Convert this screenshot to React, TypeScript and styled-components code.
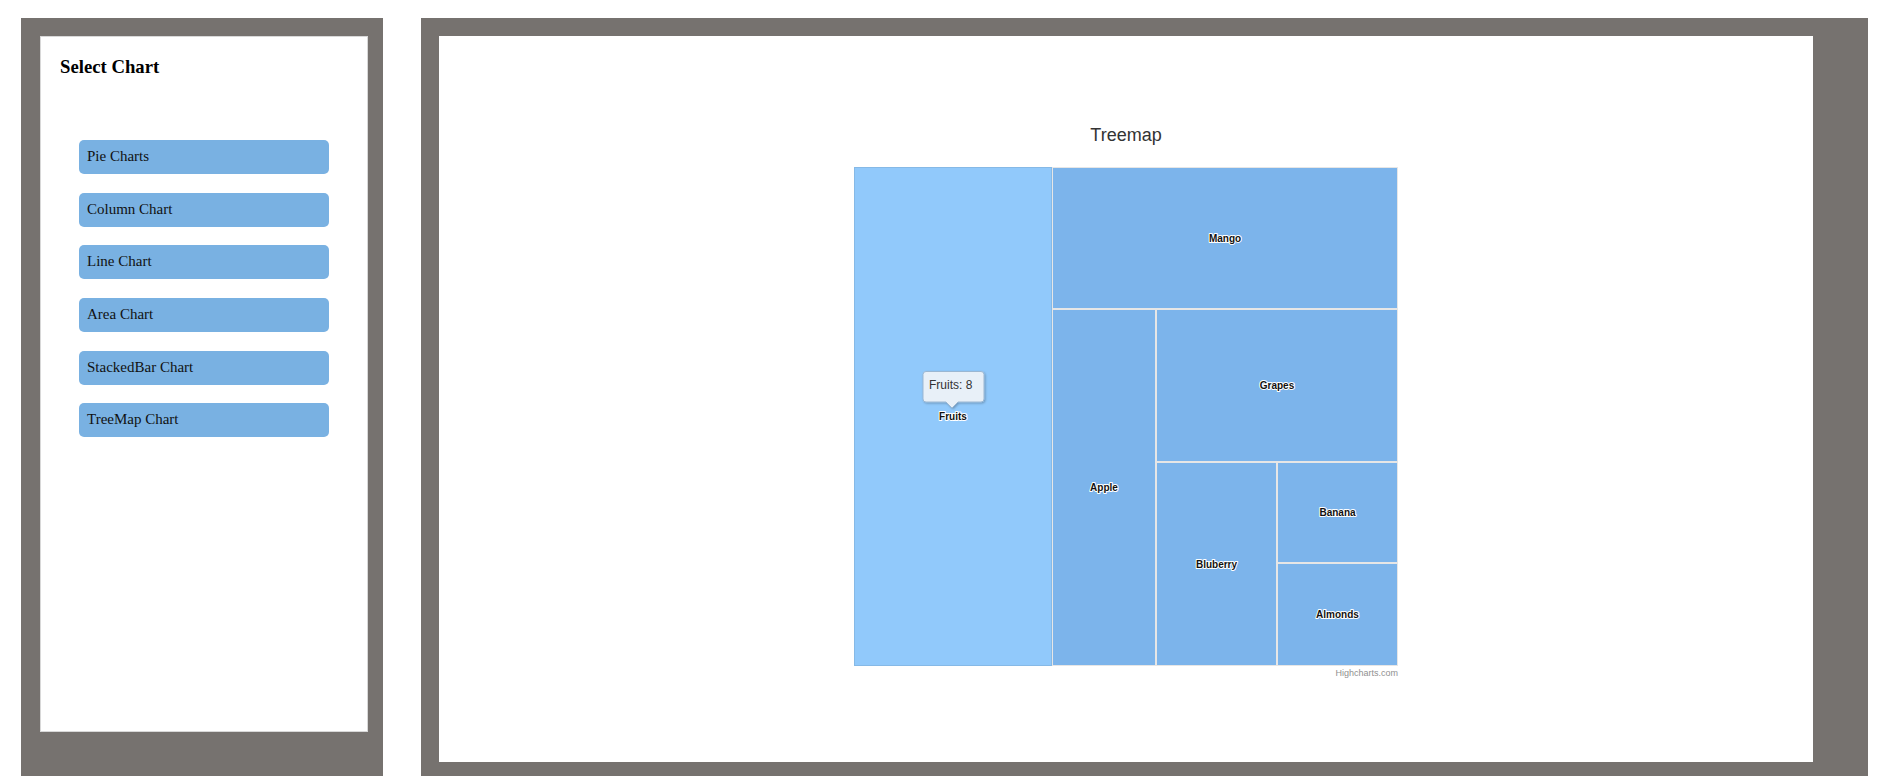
import React from "react";
import styled, { createGlobalStyle } from "styled-components";

const GlobalStyle = createGlobalStyle`
  html, body {
    margin: 0;
    padding: 0;
    background: #ffffff;
    overflow: hidden;
  }
  body {
    font-family: "Liberation Serif", "Times New Roman", serif;
  }
  * { box-sizing: border-box; }
`;

const Page = styled.div`
  display: flex;
  gap: 38px;
  height: 776px;
  padding: 18px 0 0 21px;
`;

const GreyPanel = styled.section<{ $width: number; $padRight: number; $padLeft: number }>`
  width: ${(p) => p.$width}px;
  height: 758px;
  background: #76726f;
  padding: 18px ${(p) => p.$padRight}px 0 ${(p) => p.$padLeft}px;
  flex-shrink: 0;
`;

const Sidebar = styled.div`
  height: 696px;
  background: #ffffff;
  border: 1px solid #d8d8d8;
  padding: 19px 0 0 19px;
`;

const Heading = styled.h3`
  margin: 0;
  font-family: "Liberation Serif", "Times New Roman", serif;
  font-size: 18.72px;
  font-weight: bold;
  color: #000;
  line-height: 21px;
`;

const ButtonList = styled.div`
  display: flex;
  flex-direction: column;
  gap: 18.67px;
  margin-top: 63px;
  padding-left: 19px;
`;

const ChartButton = styled.div`
  width: 250px;
  height: 34px;
  background: #79b1e2;
  border-radius: 5px;
  display: flex;
  align-items: center;
  padding-left: 8px;
  padding-bottom: 1px;
  font-family: "Liberation Serif", "Times New Roman", serif;
  font-size: 15px;
  color: #111;
`;

const ChartCard = styled.div`
  height: 726px;
  background: #ffffff;
  display: flex;
  flex-direction: column;
  align-items: center;
  padding-top: 89px;
`;

const ChartTitle = styled.div`
  font-family: "Liberation Sans", Arial, sans-serif;
  font-size: 18px;
  line-height: 21px;
  color: #333333;
  margin-bottom: 21px;
`;

const Plot = styled.svg`
  display: block;
  overflow: visible;
`;

const buttons = [
  "Pie Charts",
  "Column Chart",
  "Line Chart",
  "Area Chart",
  "StackedBar Chart",
  "TreeMap Chart",
];

type Cell = { name: string; x: number; y: number; w: number; h: number; fill: string };

const cells: Cell[] = [
  { name: "Fruits", x: 0, y: 0, w: 198, h: 499, fill: "#91c9fb" },
  { name: "Mango", x: 198, y: 0, w: 346, h: 142, fill: "#7cb4eb" },
  { name: "Apple", x: 198, y: 142, w: 104, h: 357, fill: "#7cb4eb" },
  { name: "Grapes", x: 302, y: 142, w: 242, h: 153, fill: "#7cb4eb" },
  { name: "Bluberry", x: 302, y: 295, w: 121, h: 204, fill: "#7cb4eb" },
  { name: "Banana", x: 423, y: 295, w: 121, h: 101, fill: "#7cb4eb" },
  { name: "Almonds", x: 423, y: 396, w: 121, h: 103, fill: "#7cb4eb" },
];

const labelStyle: React.CSSProperties = {
  paintOrder: "stroke",
};

function Treemap() {
  return (
    <Plot width={544} height={515} viewBox="0 0 544 515">
      <defs>
        <filter id="tipShadow" x="-20%" y="-20%" width="140%" height="150%">
          <feDropShadow dx="1" dy="1" stdDeviation="1" floodColor="#000" floodOpacity="0.25" />
        </filter>
      </defs>
      {cells.map((c) => (
        <rect
          key={c.name}
          x={c.x + 0.5}
          y={c.y + 0.5}
          width={c.w - 1}
          height={c.h - 1}
          fill={c.fill}
          stroke={c.name === "Fruits" ? "#86b9e6" : "#e6e6e6"}
          strokeWidth={1}
        />
      ))}
      {cells.map((c) => (
        <text
          key={c.name + "-l"}
          x={c.x + c.w / 2}
          y={c.y + c.h / 2 + 3.5}
          textAnchor="middle"
          fontFamily='"Liberation Sans", Arial, sans-serif'
          fontSize={10}
          fontWeight="bold"
          fill="#111"
          stroke="#ffffff"
          strokeWidth={2}
          strokeLinejoin="round"
          style={labelStyle}
        >
          {c.name}
        </text>
      ))}
      <g filter="url(#tipShadow)">
        <path
          d="M 72 204.5 L 127 204.5 Q 130 204.5 130 207.5 L 130 232 Q 130 235 127 235 L 104 235 L 98 241 L 92 235 L 72 235 Q 69 235 69 232 L 69 207.5 Q 69 204.5 72 204.5 Z"
          fill="#e8f0f8"
          stroke="#9bb7d2"
          strokeWidth={1}
        />
      </g>
      <text
        x={75}
        y={222}
        fontFamily='"Liberation Sans", Arial, sans-serif'
        fontSize={12}
        fill="#333333"
      >
        Fruits: 8
      </text>
      <text
        x={544}
        y={509}
        textAnchor="end"
        fontFamily='"Liberation Sans", Arial, sans-serif'
        fontSize={9}
        fill="#909090"
      >
        Highcharts.com
      </text>
    </Plot>
  );
}

export default function App() {
  return (
    <>
      <GlobalStyle />
      <Page>
        <GreyPanel $width={362} $padLeft={19} $padRight={15}>
          <Sidebar>
            <Heading>Select Chart</Heading>
            <ButtonList>
              {buttons.map((b) => (
                <ChartButton key={b}>{b}</ChartButton>
              ))}
            </ButtonList>
          </Sidebar>
        </GreyPanel>
        <GreyPanel $width={1447} $padLeft={18} $padRight={55}>
          <ChartCard>
            <ChartTitle>Treemap</ChartTitle>
            <Treemap />
          </ChartCard>
        </GreyPanel>
      </Page>
    </>
  );
}
